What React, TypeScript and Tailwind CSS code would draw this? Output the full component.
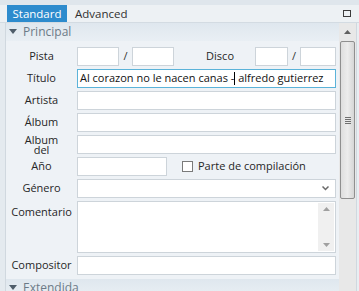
import React from 'react';

const font = { fontFamily: '"Open Sans", "Noto Sans", sans-serif' };

const Field: React.FC<{ className?: string; children?: React.ReactNode }> = ({ className = '', children }) => (
  <div className={`h-[19px] bg-white border border-[#cdd4da] ${className}`}>{children}</div>
);

const Row: React.FC<{ label: React.ReactNode; children: React.ReactNode; top?: boolean }> = ({ label, children, top }) => (
  <div className={`flex ${top ? 'items-start' : 'items-center h-[19px]'}`}>
    <div className={`w-[71px] shrink-0 text-center text-[#262626] ${top ? 'pt-[3px]' : ''}`}>{label}</div>
    <div className="flex-1 flex items-center">{children}</div>
  </div>
);

const SectionHeader: React.FC<{ title: string }> = ({ title }) => (
  <div className="h-[18px] flex items-center bg-gradient-to-b from-[#dfe7ee] to-[#e9eff4] text-[#6c7a87] text-[12px]">
    <svg width="8" height="6" viewBox="0 0 8 6" className="ml-[3px] mr-[6px]">
      <path d="M0 0 H8 L4 5 Z" fill="#4f5d6a" />
    </svg>
    <span>{title}</span>
  </div>
);

export default function App() {
  return (
    <div className="w-[359px] h-[291px] overflow-hidden bg-[#e9eef2] text-[11px]" style={font}>
      {/* top strip */}
      <div className="h-[5px] bg-[#dfe6ec]" />
      {/* tabs */}
      <div className="h-[18px] flex items-stretch border-b border-[#d3dbe2] bg-[#edf1f4] text-[11.5px]">
        <div className="ml-[7px] w-[60px] bg-[#2d8bcd] text-white flex items-center justify-center">Standard</div>
        <div className="ml-[8px] flex items-center text-[#303030]">Advanced</div>
        <div className="flex-1" />
        <div className="mr-[8px] flex items-center">
          <div className="w-[8px] h-[7px] border border-[#3c3c3c]" />
        </div>
      </div>

      <div className="flex h-[268px]">
        <div className="w-[6px] bg-[#e4eaef] border-r border-[#d0d8df]" />
        {/* content */}
        <div className="w-[333px] bg-[#eef2f6] flex flex-col">
          <SectionHeader title="Principal" />
          <div className="flex flex-col gap-[3px] pt-[6px] pr-[3px]">
            <Row label="Pista">
              <Field className="w-[42px]" />
              <span className="w-[13px] text-center text-[#333]">/</span>
              <Field className="w-[42px]" />
              <span className="w-[81px] text-right pr-[21px] text-[#262626]">Disco</span>
              <Field className="w-[33px]" />
              <span className="w-[12px] text-center text-[#333]">/</span>
              <Field className="flex-1" />
            </Row>
            <Row label="Título">
              <div className="flex-1 h-[19px] bg-white border border-[#5bb3d9] flex items-center pl-[2px] text-[#111] whitespace-nowrap overflow-hidden">
                <span>Al corazon no le nacen canas -</span>
                <span className="inline-block w-px h-[13px] bg-black" />
                <span>&nbsp;alfredo gutierrez</span>
              </div>
            </Row>
            <Row label="Artista">
              <Field className="flex-1" />
            </Row>
            <Row label="Álbum">
              <Field className="flex-1" />
            </Row>
            <Row label={<span className="block leading-[10px]">Album<br />del</span>}>
              <Field className="flex-1" />
            </Row>
            <Row label="Año">
              <Field className="w-[90px]" />
              <div className="ml-[15px] w-[11px] h-[11px] border border-[#7a7a7a] bg-white" />
              <span className="ml-[5px] text-[#262626]">Parte de compilación</span>
            </Row>
            <Row label="Género">
              <Field className="flex-1 flex items-center justify-end pr-[6px]">
                <svg width="7" height="5" viewBox="0 0 7 5">
                  <path d="M0.5 0.5 L3.5 3.5 L6.5 0.5" stroke="#6a6a6a" strokeWidth="1.5" fill="none" />
                </svg>
              </Field>
            </Row>
            <Row label="Comentario" top>
              <div className="flex-1 h-[52px] bg-white border border-[#cdd4da] flex justify-end p-[1px]">
                <div className="w-[16px] bg-[#f0f0f0] flex flex-col items-center justify-between py-[4px]">
                  <svg width="7" height="4" viewBox="0 0 7 4"><path d="M0 4 L3.5 0 L7 4 Z" fill="#a0a0a0" /></svg>
                  <svg width="7" height="4" viewBox="0 0 7 4"><path d="M0 0 L3.5 4 L7 0 Z" fill="#a0a0a0" /></svg>
                </div>
              </div>
            </Row>
            <Row label="Compositor">
              <Field className="flex-1" />
            </Row>
          </div>
          <div className="mt-[4px]">
            <SectionHeader title="Extendida" />
          </div>
        </div>
        {/* scrollbar */}
        <div className="w-[17px] bg-[#e8e8e8] flex flex-col items-center">
          <div className="h-[18px] flex items-center">
            <svg width="7" height="4" viewBox="0 0 7 4"><path d="M0 4 L3.5 0 L7 4 Z" fill="#606060" /></svg>
          </div>
          <div className="w-[15px] h-[158px] rounded-[2px] border border-[#8f8f8f] bg-gradient-to-r from-[#dedede] via-[#ececec] to-[#d6d6d6] flex items-center justify-center">
            <div className="flex flex-col gap-[1px]">
              <div className="w-[6px] h-px bg-[#6f6f6f]" />
              <div className="w-[6px] h-px bg-[#6f6f6f]" />
              <div className="w-[6px] h-px bg-[#6f6f6f]" />
              <div className="w-[6px] h-px bg-[#6f6f6f]" />
            </div>
          </div>
        </div>
        <div className="w-[3px] border-l border-[#d0d8df] bg-[#e9eef2]" />
      </div>
    </div>
  );
}
